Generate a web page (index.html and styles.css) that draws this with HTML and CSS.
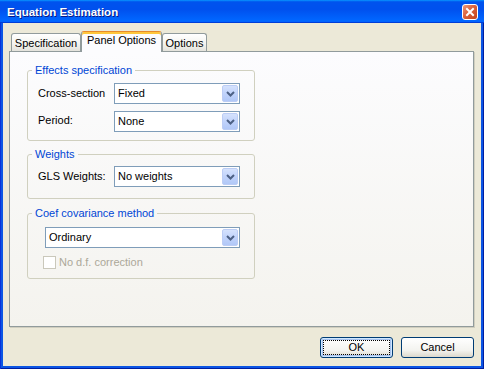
FILE: index.html
```html
<!DOCTYPE html>
<html>
<head>
<meta charset="utf-8">
<link rel="stylesheet" href="styles.css">
</head>
<body>
<div class="window">
  <div class="titlebar">
    <span class="title">Equation Estimation</span>
    <span class="close"><svg width="14" height="14" viewBox="0 0 14 14"><path d="M4 4 L10 10 M10 4 L4 10" stroke="#fff" stroke-width="2" stroke-linecap="square" fill="none"/></svg></span>
  </div>
  <div class="frame">
    <div class="client">
      <div class="tabs">
        <div class="tab tab-spec">Specification</div>
        <div class="tab active tab-panel">Panel Options</div>
        <div class="tab tab-opts">Options</div>
      </div>
      <div class="panel">
        <fieldset class="group">
          <legend>Effects specification</legend>
          <div class="group-body body-effects">
            <div class="row">
              <span class="lbl">Cross-section</span>
              <div class="combo"><span class="val">Fixed</span><span class="drop"><svg width="9" height="6" viewBox="0 0 9 6"><path d="M1 1 L4.5 4.5 L8 1" stroke="#4D6185" stroke-width="2" fill="none"/></svg></span></div>
            </div>
            <div class="row">
              <span class="lbl lbl-up">Period:</span>
              <div class="combo"><span class="val">None</span><span class="drop"><svg width="9" height="6" viewBox="0 0 9 6"><path d="M1 1 L4.5 4.5 L8 1" stroke="#4D6185" stroke-width="2" fill="none"/></svg></span></div>
            </div>
          </div>
        </fieldset>
        <fieldset class="group group-weights">
          <legend>Weights</legend>
          <div class="group-body body-weights">
            <div class="row">
              <span class="lbl">GLS Weights:</span>
              <div class="combo"><span class="val">No weights</span><span class="drop"><svg width="9" height="6" viewBox="0 0 9 6"><path d="M1 1 L4.5 4.5 L8 1" stroke="#4D6185" stroke-width="2" fill="none"/></svg></span></div>
            </div>
          </div>
        </fieldset>
        <fieldset class="group group-coef">
          <legend>Coef covariance method</legend>
          <div class="group-body body-coef">
            <div class="combo combo-wide"><span class="val">Ordinary</span><span class="drop"><svg width="9" height="6" viewBox="0 0 9 6"><path d="M1 1 L4.5 4.5 L8 1" stroke="#4D6185" stroke-width="2" fill="none"/></svg></span></div>
            <div class="check-row">
              <span class="checkbox"></span>
              <span class="check-label">No d.f. correction</span>
            </div>
          </div>
        </fieldset>
      </div>
      <div class="buttons">
        <button class="btn btn-default"><span class="focus">OK</span></button>
        <button class="btn"><span class="nofocus">Cancel</span></button>
      </div>
    </div>
  </div>
</div>
</body>
</html>
```
FILE: styles.css
```css
* { box-sizing: border-box; }
html, body { margin: 0; padding: 0; }
body {
  width: 484px;
  height: 369px;
  overflow: hidden;
  font-family: "Liberation Sans", Arial, sans-serif;
  font-size: 11px;
  color: #000;
  background: #fff;
}
.window {
  width: 484px;
  height: 369px;
  display: flex;
  flex-direction: column;
}
.titlebar {
  height: 23px;
  flex: none;
  display: flex;
  align-items: center;
  justify-content: space-between;
  padding: 0 6px 0 7px;
  background: linear-gradient(180deg, #0997ff, #0053ee 8%, #0050ee 40%, #0066ff 88%, #0066ff 93%, #005bff 95%, #003dd7 96%, #003dd7);
}
.title {
  color: #fff;
  font-weight: bold;
  font-size: 11.5px;
  text-shadow: 1px 1px 0 #0a1883;
}
.close {
  width: 16px;
  height: 16px;
  border: 1px solid #fff;
  border-radius: 3px;
  background: linear-gradient(135deg, #ee9a7c, #d9613c 45%, #c2431b);
  display: flex;
  align-items: center;
  justify-content: center;
}
.frame {
  flex: 1;
  display: flex;
  padding: 0 3px 3px 3px;
  background: #0b55e4;
  box-shadow: inset 1px 0 #0831d9, inset -1px -1px #001ea0;
}
.client {
  flex: 1;
  background: #ece9d8;
  display: flex;
  flex-direction: column;
  padding: 8px 7px 0 6px;
}
.tabs {
  display: flex;
  align-items: flex-end;
  height: 21px;
  margin: 0 0 -1px 2px;
  position: relative;
  z-index: 1;
}
.tab {
  height: 18px;
  margin-bottom: 1px;
  border: 1px solid #919b9c;
  border-bottom: none;
  border-radius: 3px 3px 0 0;
  background: linear-gradient(#ffffff, #f4f4f0 55%, #e4e3dc);
  display: flex;
  align-items: center;
  justify-content: center;
  line-height: 13px;
  padding-top: 1px;
}
.tab-spec { width: 70px; }
.tab-panel { width: 81px; }
.tab-opts { width: 45px; }
.tab.active {
  height: 21px;
  margin-bottom: 0;
  background: #fcfcfe;
  border-top: 1px solid #e68b2c;
  box-shadow: inset 0 2px 0 #ffc73c;
  padding: 0 0 3px 0;
}
.panel {
  height: 276px;
  flex: none;
  border: 1px solid #919b9c;
  background: linear-gradient(#fcfcfe, #f4f3ee);
  box-shadow: 1px 1px 0 #d0cebf;
  padding: 12px 0 0 17px;
}
.group {
  width: 228px;
  margin: 0;
  padding: 0;
  min-width: 0;
  border: 1px solid #d0d0bf;
  border-radius: 3px;
}
.group legend {
  margin-left: 4px;
  padding: 0 3px;
  line-height: 13px;
  color: #0046d5;
}
.group-weights { margin-top: 7px; }
.group-coef { margin-top: 8px; }
.body-effects {
  padding: 6px 0 8px 10px;
  display: flex;
  flex-direction: column;
  gap: 7px;
}
.body-weights { padding: 5px 0 11px 10px; }
.body-coef { padding: 7px 0 9px 17px; }
.row {
  display: flex;
  align-items: center;
  height: 21px;
}
.lbl { width: 76px; line-height: 13px; }
.lbl-up { position: relative; top: -1px; }
.combo {
  width: 126px;
  height: 21px;
  border: 1px solid #7f9db9;
  background: #fff;
  display: flex;
  align-items: center;
  padding: 1px;
}
.combo-wide { width: 195px; }
.val { flex: 1; padding-left: 2px; line-height: 13px; }
.drop {
  width: 16px;
  height: 17px;
  border: 1px solid #bccdf5;
  border-radius: 2px;
  background: linear-gradient(#d5e2fd, #c1d3fb 50%, #b1c8f7);
  display: flex;
  align-items: center;
  justify-content: center;
}
.check-row {
  display: flex;
  align-items: center;
  gap: 3px;
  height: 13px;
  margin: 8px 0 0 -2px;
  color: #aca899;
}
.checkbox {
  width: 13px;
  height: 13px;
  border: 1px solid #cac8bb;
  background: #fff;
}
.check-label { line-height: 13px; }
.buttons {
  display: flex;
  justify-content: flex-end;
  gap: 8px;
  margin-top: 10px;
}
.btn {
  width: 73px;
  height: 21px;
  padding: 0;
  font: inherit;
  color: #000;
  border: 1px solid #003c74;
  border-radius: 3px;
  background: linear-gradient(#ffffff, #f3f3ef 65%, #dcd8cc);
  display: flex;
  align-items: stretch;
  justify-content: stretch;
}
.btn-default {
  box-shadow: inset 0 0 0 1px #cee7ff, inset 0 0 0 2px #a7c3ef;
}
.focus, .nofocus {
  flex: 1;
  margin: 2px;
  display: flex;
  align-items: center;
  justify-content: center;
  line-height: 13px;
}
.focus { border: 1px dotted #000; }
.nofocus { border: 1px solid transparent; }
```
